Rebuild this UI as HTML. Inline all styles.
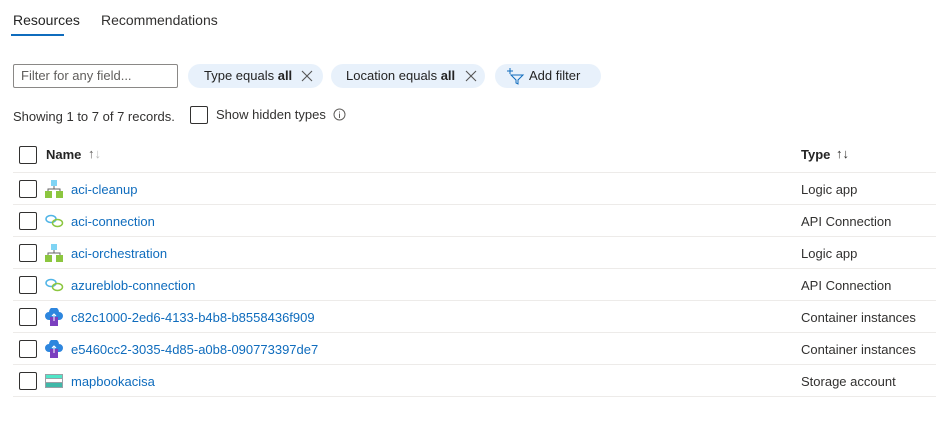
<!DOCTYPE html>
<html><head><style>
body{margin:0;width:936px;height:436px;background:#fff;font-family:"Liberation Sans",sans-serif;font-size:13px;color:#323130;position:relative;overflow:hidden}
.a{position:absolute;white-space:nowrap}
.tab{font-size:14px;top:12px}
.pill{position:absolute;top:64px;height:24px;border-radius:12px;background:#e8f1fb;line-height:24px;font-size:13px;color:#242424}
.cb{position:absolute;width:16px;height:16px;border:1px solid #323130;border-radius:2px;left:19px}
.line{position:absolute;left:13px;width:923px;height:1px;background:#edebe9}
.lnk{color:#0f6cbd}
.x{position:absolute;top:6px;width:12px;height:12px}
</style></head><body>
<div class="a tab" style="left:13px;color:#242424">Resources</div>
<div style="position:absolute;left:11px;top:34px;width:53px;height:2px;background:#0f6cbd"></div>
<div class="a tab" style="left:101px">Recommendations</div>

<div style="position:absolute;left:13px;top:64px;width:163px;height:22px;border:1px solid #8a8886;border-radius:2px;"></div>
<div class="a" style="left:21px;top:68px;color:#605e5c">Filter for any field...</div>

<div class="pill" style="left:188px;width:135px"><span style="margin-left:16px">Type equals <b>all</b></span>
<svg class="x" style="left:113px" viewBox="0 0 12 12"><path d="M1 1L11 11M11 1L1 11" stroke="#555" stroke-width="1.1"/></svg></div>
<div class="pill" style="left:331px;width:154px"><span style="margin-left:15px">Location equals <b>all</b></span>
<svg class="x" style="left:134px" viewBox="0 0 12 12"><path d="M1 1L11 11M11 1L1 11" stroke="#555" stroke-width="1.1"/></svg></div>
<div class="pill" style="left:495px;width:106px"><svg style="position:absolute;left:10px;top:3px" width="20" height="18" viewBox="0 0 20 18"><path d="M2 4H8M5 1V7" stroke="#0f6cbd" stroke-width="1"/><path d="M6 8H18L13 13V17L11 16V13Z" fill="none" stroke="#0f6cbd" stroke-width="1"/></svg><span style="margin-left:34px">Add filter</span></div>

<div class="a" style="left:13px;top:109px">Showing 1 to 7 of 7 records.</div>
<div class="cb" style="left:190px;top:106px"></div>
<div class="a" style="left:216px;top:107px">Show hidden types</div>
<svg class="a" style="left:333px;top:108px" width="13" height="13" viewBox="0 0 13 13"><circle cx="6.5" cy="6.5" r="5.5" fill="none" stroke="#605e5c"/><path d="M6.5 5.5V10M6.5 3.5V4.5" stroke="#605e5c"/></svg>

<div class="cb" style="top:146px"></div>
<div class="a" style="left:46px;top:147px;font-weight:bold;color:#242424">Name</div>
<div class="a" style="left:88px;top:146px;color:#605e5c">↑<span style="color:#bbb">↓</span></div>
<div class="a" style="left:801px;top:147px;font-weight:bold;color:#242424">Type</div>
<div class="a" style="left:836px;top:146px;color:#323130">↑↓</div>

<div class="line" style="top:172px"></div>
<div class="line" style="top:204px"></div>
<div class="line" style="top:236px"></div>
<div class="line" style="top:268px"></div>
<div class="line" style="top:300px"></div>
<div class="line" style="top:332px"></div>
<div class="line" style="top:364px"></div>
<div class="line" style="top:396px"></div>

<!-- rows -->
<div class="cb" style="top:180px"></div>
<svg class="a" style="left:45px;top:180px" width="18" height="18" viewBox="0 0 18 18"><rect x="6" y="0" width="6" height="6" fill="#7fd4f4"/><path d="M9 6V9M3 12V9H15V12" stroke="#666" fill="none"/><rect x="0" y="11" width="7" height="7" fill="#8cc63f"/><rect x="11" y="11" width="7" height="7" fill="#8cc63f"/></svg>
<div class="a lnk" style="left:71px;top:182px">aci-cleanup</div><div class="a" style="left:801px;top:182px">Logic app</div>

<div class="cb" style="top:212px"></div>
<svg class="a" style="left:45px;top:214px" width="19" height="14" viewBox="0 0 19 14"><ellipse cx="6" cy="5" rx="5" ry="3.5" fill="none" stroke="#50b4e6" stroke-width="1.5"/><ellipse cx="12.5" cy="9" rx="5" ry="3.5" fill="none" stroke="#8cc63f" stroke-width="1.5"/></svg>
<div class="a lnk" style="left:71px;top:214px">aci-connection</div><div class="a" style="left:801px;top:214px">API Connection</div>

<div class="cb" style="top:244px"></div>
<svg class="a" style="left:45px;top:244px" width="18" height="18" viewBox="0 0 18 18"><rect x="6" y="0" width="6" height="6" fill="#7fd4f4"/><path d="M9 6V9M3 12V9H15V12" stroke="#666" fill="none"/><rect x="0" y="11" width="7" height="7" fill="#8cc63f"/><rect x="11" y="11" width="7" height="7" fill="#8cc63f"/></svg>
<div class="a lnk" style="left:71px;top:246px">aci-orchestration</div><div class="a" style="left:801px;top:246px">Logic app</div>

<div class="cb" style="top:276px"></div>
<svg class="a" style="left:45px;top:278px" width="19" height="14" viewBox="0 0 19 14"><ellipse cx="6" cy="5" rx="5" ry="3.5" fill="none" stroke="#50b4e6" stroke-width="1.5"/><ellipse cx="12.5" cy="9" rx="5" ry="3.5" fill="none" stroke="#8cc63f" stroke-width="1.5"/></svg>
<div class="a lnk" style="left:71px;top:278px">azureblob-connection</div><div class="a" style="left:801px;top:278px">API Connection</div>

<div class="cb" style="top:308px"></div>
<svg class="a" style="left:45px;top:308px" width="18" height="20" viewBox="0 0 18 20"><path d="M4 12A4 4 0 0 1 4 4A5 5 0 0 1 14 4A4 4 0 0 1 14 12Z" fill="#2e86de"/><rect x="5" y="9" width="8" height="9" fill="#7b3fbf"/><path d="M9 13V6M7 8L9 6L11 8" stroke="#fff" fill="none"/></svg>
<div class="a lnk" style="left:71px;top:310px">c82c1000-2ed6-4133-b4b8-b8558436f909</div><div class="a" style="left:801px;top:310px">Container instances</div>

<div class="cb" style="top:340px"></div>
<svg class="a" style="left:45px;top:340px" width="18" height="20" viewBox="0 0 18 20"><path d="M4 12A4 4 0 0 1 4 4A5 5 0 0 1 14 4A4 4 0 0 1 14 12Z" fill="#2e86de"/><rect x="5" y="9" width="8" height="9" fill="#7b3fbf"/><path d="M9 13V6M7 8L9 6L11 8" stroke="#fff" fill="none"/></svg>
<div class="a lnk" style="left:71px;top:342px">e5460cc2-3035-4d85-a0b8-090773397de7</div><div class="a" style="left:801px;top:342px">Container instances</div>

<div class="cb" style="top:372px"></div>
<svg class="a" style="left:45px;top:374px" width="18" height="14" viewBox="0 0 18 14"><rect width="18" height="14" fill="#9aa0a6"/><rect x="1" y="1" width="16" height="3" fill="#50e6c8"/><rect x="1" y="5" width="16" height="3" fill="#fff"/><rect x="1" y="9" width="16" height="4" fill="#3fb8a8"/></svg>
<div class="a lnk" style="left:71px;top:374px">mapbookacisa</div><div class="a" style="left:801px;top:374px">Storage account</div>
</body></html>
